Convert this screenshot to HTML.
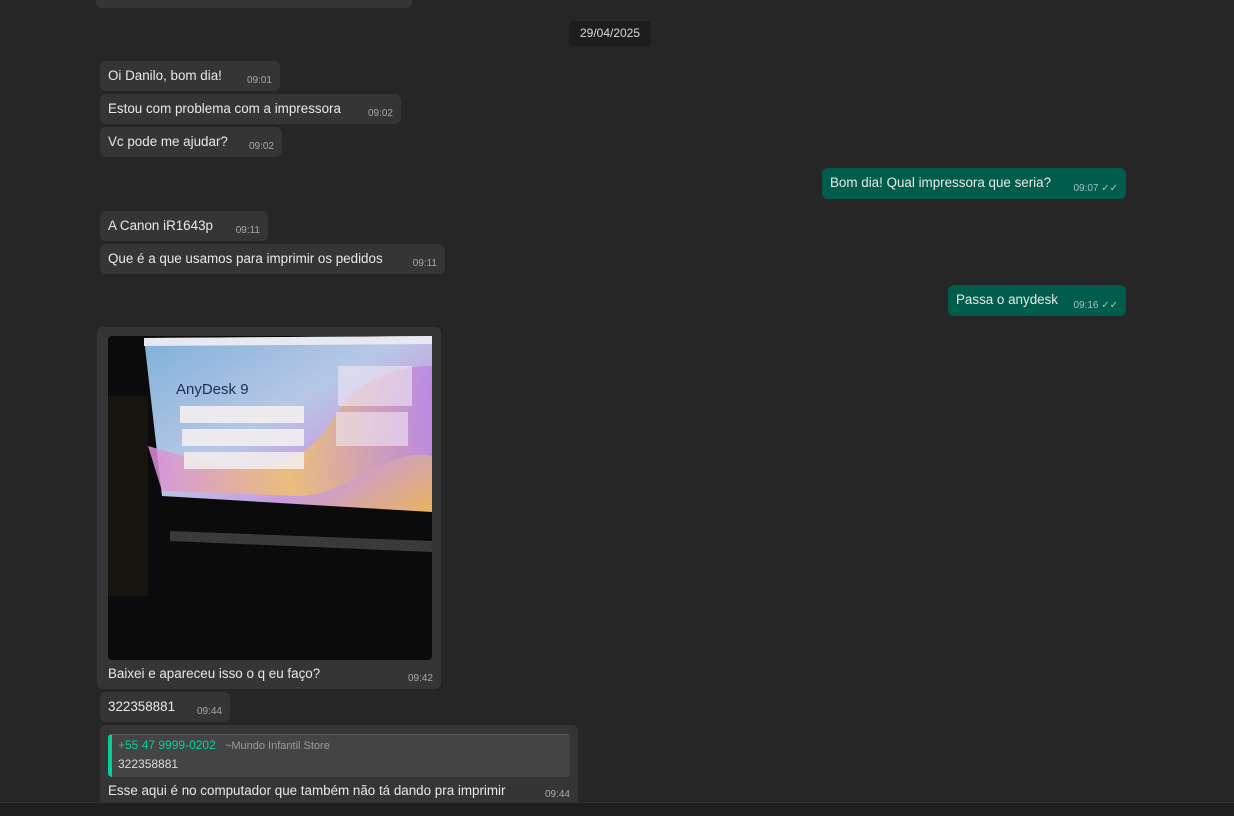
<!DOCTYPE html>
<html><head><meta charset="utf-8"><style>
*{margin:0;padding:0;box-sizing:border-box}
body{width:1234px;height:816px;overflow:hidden;background:#262626;font-family:"Segoe UI","Liberation Sans",sans-serif;color:#e9e9e9;position:relative}
.b{position:absolute;background:#353535;border-radius:6px;font-size:13.4px;line-height:20px;padding:5px 8px;white-space:nowrap}
.b .t{position:absolute;right:8px;bottom:4px;font-size:10px;color:#a8a8a8;line-height:12px}
.o{background:#005c4b}
.o .t{color:#9fc4bb}
.date{position:absolute;left:569px;top:21px;width:82px;height:25px;background:#1d1d1d;border-radius:4px;font-size:12px;text-align:center;line-height:25px;color:#d8d8d8}
.bar{position:absolute;left:0;top:802px;width:1234px;height:14px;background:#1f1f1f;border-top:1px solid #333}
</style></head><body>
<div class="b" style="left:96px;top:-12px;width:316px;height:20px"></div>
<div class="date">29/04/2025</div>
<div class="b" style="left:100px;top:61px;width:180px;height:30px">Oi Danilo, bom dia!<span class="t">09:01</span></div>
<div class="b" style="left:100px;top:94px;width:301px;height:30px">Estou com problema com a impressora<span class="t">09:02</span></div>
<div class="b" style="left:100px;top:127px;width:182px;height:30px">Vc pode me ajudar?<span class="t">09:02</span></div>
<div class="b o" style="left:822px;top:168px;width:304px;height:31px">Bom dia! Qual impressora que seria?<span class="t">09:07 ✓✓</span></div>
<div class="b" style="left:100px;top:211px;width:168px;height:30px">A Canon iR1643p<span class="t">09:11</span></div>
<div class="b" style="left:100px;top:244px;width:345px;height:30px">Que é a que usamos para imprimir os pedidos<span class="t">09:11</span></div>
<div class="b o" style="left:948px;top:285px;width:178px;height:31px">Passa o anydesk<span class="t">09:16 ✓✓</span></div>
<div class="b" style="left:97px;top:327px;width:344px;height:362px;padding:0">
<svg style="position:absolute;left:11px;top:9px" width="324" height="324" viewBox="0 0 324 324">
<defs><linearGradient id="s" x1="0" y1="0" x2="1" y2="1"><stop offset="0" stop-color="#7fb0d8"/><stop offset=".45" stop-color="#b7c8e6"/><stop offset=".7" stop-color="#c79be0"/><stop offset="1" stop-color="#e9b35d"/></linearGradient>
<linearGradient id="w" x1="0" y1="0" x2="1" y2="0"><stop offset="0" stop-color="#d98de0"/><stop offset=".5" stop-color="#f1c36a"/><stop offset="1" stop-color="#b886e6"/></linearGradient></defs>
<rect width="324" height="324" rx="4" fill="#0b0b0c"/>
<rect x="0" y="60" width="40" height="200" fill="#16140f"/>
<polygon points="36,2 324,0 324,176 54,160" fill="url(#s)"/>
<path d="M40,110 C110,130 180,150 220,90 C250,40 290,30 324,30 L324,120 C280,110 240,160 190,160 L54,155 Z" fill="url(#w)" opacity=".85"/>
<polygon points="36,2 324,0 324,8 36,10" fill="#e8e8f0"/>
<text x="68" y="58" font-family="Liberation Sans,sans-serif" font-size="15" fill="#1f2c5a">AnyDesk 9</text>
<rect x="72" y="70" width="124" height="17" fill="#f3eeee" opacity=".9"/>
<rect x="74" y="93" width="122" height="17" fill="#f3eeee" opacity=".9"/>
<rect x="76" y="116" width="120" height="17" fill="#f3eeee" opacity=".85"/>
<rect x="230" y="30" width="74" height="40" fill="#f0e8f4" opacity=".6"/>
<rect x="228" y="76" width="72" height="34" fill="#f0e8f4" opacity=".6"/>
<polygon points="62,195 324,205 324,216 62,205" fill="#3a3a3a"/>
</svg>
<div style="position:absolute;left:11px;top:337px;font-size:13.4px">Baixei e apareceu isso o q eu faço?</div>
<span class="t">09:42</span></div>
<div class="b" style="left:100px;top:692px;width:130px;height:30px">322358881<span class="t">09:44</span></div>
<div class="b" style="left:100px;top:725px;width:478px;height:80px;padding:0">
<div style="position:absolute;left:8px;top:9px;width:462px;height:43px;background:#444;border-radius:4px;border-left:4px solid #06cf9c;border-top:1px solid #5a5a5a">
<div style="position:absolute;left:6px;top:3px;font-size:11px;line-height:14px"><span style="color:#06cf9c;font-size:12px">+55 47 9999-0202</span>&nbsp;&nbsp;&nbsp;<span style="color:#9a9a9a">~Mundo Infantil Store</span></div>
<div style="position:absolute;left:6px;top:19px;font-size:12px;color:#dcdcdc">322358881</div></div>
<div style="position:absolute;left:8px;top:56px;font-size:13.4px;line-height:20px">Esse aqui é no computador que também não tá dando pra imprimir</div>
<span class="t">09:44</span></div>
<div class="bar"></div>
</body></html>
